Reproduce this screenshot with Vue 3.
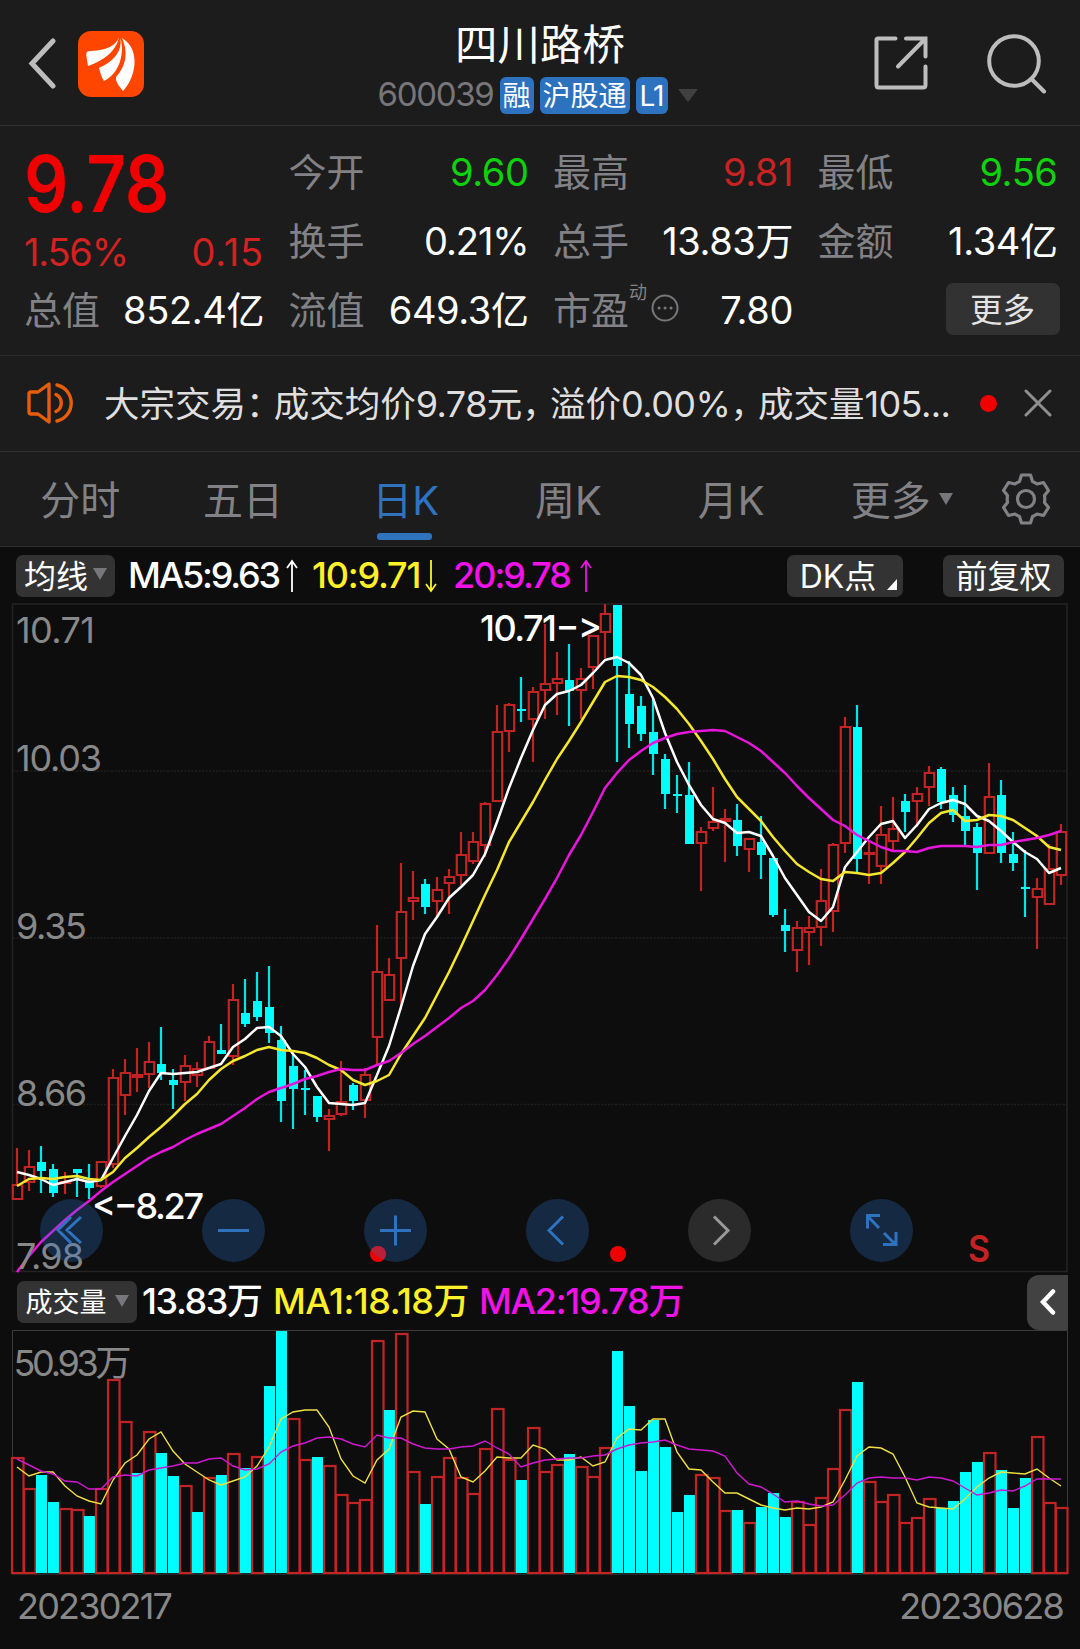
<script setup>
const STEP = 12
const FIRST = 17
const cx = (i) => FIRST + i * STEP

// direction, high, body top, body bottom, low
const candles = `
R 1148 1184 1200 1200|R 1150 1166 1183 1191|C 1146 1162 1171 1193|C 1164 1169 1193 1197|R 1172 1181 1184 1194|C 1169 1169 1173 1197|C 1164 1182 1188 1199|R 1161 1161 1187 1188|
R 1069 1077 1165 1168|R 1059 1072 1096 1115|R 1048 1074 1078 1092|R 1042 1061 1075 1088|C 1027 1064 1073 1080|C 1069 1080 1085 1109|R 1055 1065 1083 1101|R 1062 1068 1076 1087|
R 1036 1041 1069 1069|C 1024 1050 1054 1054|R 984 999 1057 1065|C 979 1013 1024 1027|C 972 1001 1017 1021|C 966 1007 1033 1043|C 1026 1040 1101 1122|C 1055 1066 1089 1129|
C 1070 1088 1089 1115|C 1096 1096 1117 1122|R 1109 1115 1120 1151|R 1061 1101 1115 1116|C 1083 1085 1101 1110|R 1068 1074 1101 1118|R 925 971 1038 1066|R 958 974 1001 1001|
R 863 911 959 1010|R 871 897 902 920|C 879 884 907 914|R 877 889 902 917|R 869 876 884 914|R 832 854 876 885|R 832 841 862 864|R 802 803 846 857|
R 705 731 802 802|R 703 704 732 752|C 677 709 710 722|R 687 691 720 762|R 624 683 691 719|R 652 678 684 715|C 644 680 691 726|R 668 678 691 719|
R 635 635 668 689|R 604 613 633 658|C 605 605 666 762|C 661 694 724 748|C 696 706 734 741|C 700 732 754 775|C 754 759 794 809|C 775 794 796 813|
C 762 795 844 844|R 827 831 844 891|R 787 821 829 831|R 809 818 822 862|C 804 820 846 856|R 838 838 850 872|C 816 842 855 879|C 858 858 915 917|
C 909 925 931 952|R 921 927 951 972|R 916 927 933 965|R 869 900 928 946|R 843 844 912 932|R 717 726 844 853|C 705 727 859 873|R 842 852 855 884|
R 806 834 867 884|R 797 828 842 850|C 794 801 812 832|R 787 793 802 827|R 766 772 788 806|C 767 769 802 809|C 787 795 815 822|C 785 816 831 846|
C 823 827 853 890|R 763 796 854 854|C 780 795 853 863|C 832 854 863 871|C 850 887 888 917|R 878 888 898 949|R 844 868 905 905|R 824 831 876 885`
  .split('|')
  .map((row, i) => {
    const [dir, high, top, bottom, low] = row.trim().split(' ')
    return { x: cx(i), up: dir === 'R', high: +high, top: +top, bottom: +bottom, low: +low }
  })

const volumeTops = [
  1457, 1488, 1475, 1502, 1508, 1509, 1516, 1488, 1379, 1421, 1473, 1431, 1453, 1476, 1485, 1512, 1477, 1475, 1453, 1468, 1456, 1386,
  1331, 1418, 1459, 1457, 1465, 1494, 1502, 1499, 1340, 1410, 1333, 1471, 1504, 1476, 1457, 1477, 1493, 1448, 1408, 1459, 1480, 1427,
  1471, 1464, 1454, 1466, 1476, 1447, 1351, 1406, 1471, 1420, 1447, 1512, 1495, 1474, 1477, 1510, 1510, 1522, 1507, 1493, 1517, 1501,
  1524, 1497, 1468, 1409, 1382, 1481, 1501, 1494, 1522, 1517, 1498, 1508, 1501, 1472, 1462, 1452, 1470, 1508, 1478, 1436, 1502, 1507,
]
// direction of each session's volume bar
const risingVolume = 'RRCCRRCRRRCRCCRCRCRCRCCRRCRRRRRCRRCRRRRRRRCRRRCRRRCCCCCCCRRRCRCCCRRRRRCRRRRRRCCCCRCCCRRR'
const volumes = volumeTops.map((top, i) => ({ x: cx(i), top, up: risingVolume[i] === 'R' }))

const line = (ys) => ys.map((y, i) => `${cx(i)},${y}`).join(' ')

const ma5 = line([
  1172, 1175, 1179, 1185, 1182, 1179, 1182, 1180, 1158, 1136, 1115, 1091, 1073, 1074, 1073, 1072, 1068, 1064, 1047, 1039, 1028, 1027,
  1036, 1054, 1067, 1087, 1103, 1104, 1105, 1103, 1075, 1046, 1007, 966, 934, 917, 898, 887, 875, 854, 822, 788, 758, 730, 705, 694,
  691, 685, 673, 660, 657, 663, 675, 698, 733, 762, 785, 805, 819, 823, 833, 832, 836, 856, 878, 895, 912, 921, 907, 867, 852, 837,
  824, 821, 838, 825, 809, 803, 800, 804, 816, 821, 831, 842, 852, 859, 873, 868,
])
const ma10 = line([
  1186, 1179, 1178, 1179, 1177, 1176, 1179, 1180, 1172, 1158, 1148, 1137, 1127, 1116, 1104, 1094, 1080, 1069, 1061, 1056, 1050, 1047,
  1050, 1051, 1053, 1058, 1065, 1070, 1080, 1085, 1081, 1075, 1054, 1036, 1018, 995, 972, 947, 921, 895, 870, 842, 822, 802, 780, 759,
  741, 722, 702, 682, 676, 677, 680, 687, 697, 709, 724, 741, 759, 779, 797, 809, 821, 837, 851, 864, 872, 879, 881, 872, 873, 875,
  873, 863, 852, 838, 823, 813, 810, 821, 820, 815, 816, 820, 828, 836, 847, 850,
])
const ma20 = line([
  1272, 1256, 1242, 1231, 1220, 1210, 1201, 1191, 1182, 1174, 1166, 1158, 1152, 1147, 1140, 1134, 1129, 1124, 1116, 1108, 1099, 1092,
  1088, 1084, 1079, 1076, 1072, 1069, 1070, 1070, 1065, 1061, 1053, 1044, 1036, 1027, 1018, 1008, 1001, 990, 975, 958, 939, 919, 899,
  878, 855, 835, 812, 788, 773, 760, 751, 743, 738, 734, 732, 731, 730, 731, 737, 743, 751, 762, 773, 786, 798, 809, 820, 826, 835,
  841, 847, 851, 851, 852, 848, 846, 846, 846, 847, 845, 845, 842, 840, 838, 835, 831,
])
const volMa1 = line([
  1467, 1476, 1472, 1472, 1486, 1496, 1501, 1504, 1480, 1463, 1455, 1439, 1432, 1451, 1464, 1472, 1480, 1485, 1481, 1477, 1466, 1447,
  1419, 1412, 1410, 1410, 1427, 1459, 1476, 1483, 1460, 1449, 1417, 1411, 1412, 1439, 1449, 1477, 1482, 1471, 1457, 1458, 1458, 1445,
  1449, 1460, 1460, 1457, 1466, 1462, 1438, 1429, 1430, 1419, 1419, 1452, 1469, 1470, 1482, 1493, 1493, 1499, 1505, 1508, 1510, 1508,
  1509, 1507, 1502, 1480, 1456, 1447, 1448, 1454, 1477, 1503, 1507, 1508, 1509, 1499, 1487, 1478, 1472, 1473, 1474, 1469, 1478, 1486,
])
const volMa2 = line([
  1459, 1465, 1471, 1474, 1481, 1482, 1489, 1489, 1477, 1475, 1476, 1470, 1468, 1466, 1463, 1463, 1459, 1458, 1466, 1470, 1469, 1464,
  1452, 1446, 1443, 1438, 1437, 1439, 1444, 1447, 1435, 1438, 1438, 1444, 1448, 1449, 1449, 1447, 1446, 1441, 1448, 1454, 1467, 1463,
  1460, 1459, 1458, 1458, 1456, 1455, 1449, 1445, 1443, 1442, 1440, 1445, 1449, 1450, 1451, 1456, 1473, 1484, 1487, 1494, 1502, 1501,
  1504, 1506, 1505, 1495, 1483, 1478, 1477, 1478, 1478, 1480, 1477, 1478, 1481, 1488, 1495, 1493, 1490, 1491, 1486, 1479, 1479, 1479,
])

const priceLabels = [
  { text: '10.71', y: 643, w: 79 },
  { text: '10.03', y: 771, w: 86 },
  { text: '9.35', y: 939, w: 71 },
  { text: '8.66', y: 1106, w: 71 },
  { text: '7.98', y: 1269, w: 68 },
]
const tabs = ['分时', '五日', '日K', '周K', '月K', '更多']
</script>

<template>
  <div class="app">
    <header class="top">
      <div class="brand">
        <svg class="back" width="30" height="52" viewBox="0 0 30 52"><path d="M25 4L4 26.500L25 49" /></svg>
        <svg width="66" height="66" viewBox="0 0 66 66">
          <rect width="66" height="66" rx="13" fill="#ff4600" />
          <g fill="#fff">
            <path d="M41 6C38 15 29 19 13 20C8 20 8 22 8.500 26L10 35C22 31 38 22 41 6Z" />
            <path d="M42.500 7C44 19 38 29 21 37C23 44 24 47 26 50C41 43 47 23 42.500 7Z" />
            <path d="M44 7C50 20 49 34 38 46C37 51 42 56 45 60C57 48 64 19 44 7Z" />
          </g>
        </svg>
      </div>
      <div class="title">
        <h1>四川路桥</h1>
        <div class="sub">
          <span class="code">600039</span>
          <span class="badge">融</span>
          <span class="badge wide">沪股通</span>
          <span class="badge l1">L1</span>
          <i class="tri dim"></i>
        </div>
      </div>
      <div class="actions">
        <svg width="54" height="54" viewBox="0 0 54 54"><path d="M21.500 2.500H4Q2.500 2.500 2.500 4V49Q2.500 51.500 4.500 51.500H49Q51.500 51.500 51.500 49V30.500M32 2.500H51.500V20.500M51 3L24 30.500" /></svg>
        <svg width="60" height="60" viewBox="0 0 60 60"><circle cx="27" cy="27" r="24.800" /><path d="M44.500 45L57 57.500" /></svg>
      </div>
    </header>

    <section class="quote">
      <div class="last">
        <b>9.78</b>
        <div><span>1.56%</span><span class="diff">0.15</span></div>
      </div>
      <div class="cell"><label>今开</label><span class="green">9.60</span></div>
      <div class="cell"><label>最高</label><span class="red">9.81</span></div>
      <div class="cell"><label>最低</label><span class="green">9.56</span></div>
      <div class="cell"><label>换手</label><span class="pct">0.21%</span></div>
      <div class="cell"><label>总手</label><span>13.83万</span></div>
      <div class="cell"><label>金额</label><span>1.34亿</span></div>
      <div class="cell"><label>总值</label><span>852.4亿</span></div>
      <div class="cell"><label>流值</label><span>649.3亿</span></div>
      <div class="cell">
        <label>市盈</label><sup>动</sup>
        <svg class="dots" width="28" height="28" viewBox="0 0 28 28"><circle cx="14" cy="14" r="12.500" /><path d="M8 14h.1M14 14h.1M20 14h.1" /></svg>
        <span>7.80</span>
      </div>
      <div class="cell end"><button class="more">更多</button></div>
    </section>

    <section class="news">
      <svg width="51" height="42" viewBox="0 0 51 42">
        <path d="M2 12Q2 10 4 10H11L22 2V40L11 32H4Q2 32 2 30ZM29 12.500A9.500 9.500 0 0 1 29 29.500M30 3A18.500 18.500 0 0 1 30 39" />
      </svg>
      <p>大宗交易<i>：</i>成交均价<span>9.78</span>元<i>，</i>溢价<span>0.00%</span><i>，</i>成交量<span>105...</span></p>
      <em></em>
      <svg class="close" width="28" height="28" viewBox="0 0 28 28"><path d="M2 2L26 26M26 2L2 26" /></svg>
    </section>

    <nav class="tabs">
      <a v-for="(t, i) in tabs" :key="t" :class="{ on: i === 2, drop: i === 5 }">{{ t }}<i v-if="i === 5" class="tri"></i></a>
      <svg width="50" height="52" viewBox="0 0 50 52">
        <path d="M20.500 2H29.500L31.500 8.500Q34 9.500 36 11L42.500 9.500L47.500 17.500L43.500 22.500Q44 26 43.500 29.500L47.500 34.500L42.500 42.500L36 41Q34 42.500 31.500 43.500L29.500 50H20.500L18.500 43.500Q16 42.500 14 41L7.500 42.500L2.500 34.500L6.500 29.500Q6 26 6.500 22.500L2.500 17.500L7.500 9.500L14 11Q16 9.500 18.500 8.500Z" />
        <circle cx="25" cy="26" r="8.500" />
      </svg>
    </nav>

    <div class="bar price-bar">
      <button class="pick avg">均线<i class="tri"></i></button>
      <span class="v5">MA5:9.63</span>
      <svg class="arrow" width="14" height="34" viewBox="0 0 14 34" stroke="#fff"><path d="M7 33V2M2 9L7 2L12 9" /></svg>
      <span class="v10">10:9.71</span>
      <svg class="arrow" width="14" height="34" viewBox="0 0 14 34" stroke="#fff029"><path d="M7 1V32M2 25L7 32L12 25" /></svg>
      <span class="v20">20:9.78</span>
      <svg class="arrow" width="14" height="34" viewBox="0 0 14 34" stroke="#f012e8"><path d="M7 33V2M2 9L7 2L12 9" /></svg>
      <button class="pick dk"><span>DK</span>点<i class="corner"></i></button>
      <button class="pick adj">前复权</button>
    </div>

    <svg class="chart" width="1080" height="671" viewBox="0 603 1080 671">
      <path class="grid" d="M13 771H1067M13 938H1067M13 1104.500H1067" />
      <path d="M12.500 604H1067V1271.500H12.500Z" fill="none" stroke="#242424" stroke-width="1.500" />
      <template v-for="c in candles" :key="c.x">
        <path v-if="c.up" class="up" :d="`M${c.x} ${c.high}V${c.top}M${c.x} ${c.bottom}V${c.low}M${c.x - 4.2} ${c.top + 1}H${c.x + 5.2}V${c.bottom - 1}H${c.x - 4.2}Z`" />
        <template v-else>
          <path class="down" :d="`M${c.x} ${c.high}V${c.low}`" />
          <rect class="fill" :x="c.x - 4" :y="c.top" width="9" :height="Math.max(2, c.bottom - c.top)" />
        </template>
      </template>
      <polyline class="ma" :points="ma5" stroke="#fff" />
      <polyline class="ma" :points="ma10" stroke="#f5e62e" />
      <polyline class="ma" :points="ma20" stroke="#e815dc" />
      <text v-for="l in priceLabels" :key="l.text" class="axis" x="16" :y="l.y" :textLength="l.w">{{ l.text }}</text>
      <text class="mark" x="480" y="641" textLength="122">10.71−&gt;</text>
      <text class="mark" x="92" y="1219" textLength="112">&lt;−8.27</text>
      <circle cx="378" cy="1254" r="8" fill="#f00000" /><circle cx="618" cy="1254" r="8" fill="#f00000" />
      <text class="sell" x="968" y="1262" textLength="22" lengthAdjust="spacingAndGlyphs">S</text>
      <g class="tools">
        <circle v-for="x in [71.5, 233.5, 395.5, 557.5, 881.5]" :key="x" :cx="x" cy="1230.500" r="31.500" fill="rgba(42,119,205,.28)" />
        <circle cx="719.500" cy="1230.500" r="31.500" fill="#2b2b2b" />
        <path d="M71 1217L58 1230L71 1243M81 1217L67 1230L81 1243M218 1230.500H249M380 1230.500H411M395.500 1215.500V1245.500M563 1216.500L549 1230.500L563 1244.500M880 1215.500H867.500V1228.500M867.500 1216L879 1228M884 1233L896 1245M896 1232V1244.500H883" stroke="#2f73be" />
        <path d="M714 1216.500L728 1230.500L714 1244.500" stroke="#999" />
      </g>
    </svg>

    <div class="bar vol-bar">
      <button class="pick vol">成交量<i class="tri"></i></button>
      <span class="w0">13.83万</span>
      <span class="w1">MA1:18.18万</span>
      <span class="w2">MA2:19.78万</span>
      <button class="fold"><svg width="16" height="26" viewBox="0 0 16 26"><path d="M13 2.500L3 13L13 23.500" /></svg></button>
    </div>

    <svg class="chart" width="1080" height="246" viewBox="0 1329 1080 246">
      <path d="M12.500 1574V1330.500H1067.500V1574Z" fill="none" stroke="#3c3c3c" stroke-width="1" />
      <text class="axis" x="13.500" y="1376" textLength="118">50.93万</text>
      <template v-for="v in volumes" :key="v.x">
        <rect v-if="v.up" class="vup" :x="v.x - 5" :y="v.top + 1" width="11.500" :height="1572 - v.top" />
        <rect v-else class="fill" :x="v.x - 5" :y="v.top" width="11" :height="1573 - v.top" />
      </template>
      <polyline class="vma" :points="volMa1" stroke="#efe040" />
      <polyline class="vma" :points="volMa2" stroke="#cf18cf" />
    </svg>

    <footer class="dates"><span>20230217</span><span>20230628</span></footer>
  </div>
</template>

<style>
body {
  margin: 0;
  background: #0d0d0d;
}
</style>

<style scoped>
.app {
  width: 1080px;
  height: 1649px;
  overflow: hidden;
  background: #0d0d0d;
  color: #fff;
  font-family: Inter, "Noto Sans CJK SC", sans-serif;
  line-height: 1.2;
}
svg { display: block; flex: none; }
i, em { font-style: normal; }
button { border: 0; margin: 0; padding: 0; font: inherit; color: #fff; box-sizing: border-box; }
.tri { display: inline-block; flex: none; border: 7.5px solid transparent; border-top: 12px solid #77777b; border-bottom: 0; }

.top {
  height: 126px;
  box-sizing: border-box;
  display: flex;
  justify-content: space-between;
  background: #1c1c1c;
  border-bottom: 1px solid #303030;
}
.brand { display: flex; width: 300px; box-sizing: border-box; padding: 31px 0 0 26px; }
.back { margin: 6px 20px 0 1.5px; fill: none; stroke: #bdbdbd; stroke-width: 5; stroke-linecap: round; }
.title { display: flex; flex-direction: column; align-items: center; }
h1 { margin: 16px 0 0; font-size: 42.5px; line-height: 58px; font-weight: 400; }
.sub { display: flex; align-items: center; height: 38px; margin: 2px 5px 0 0; }
.code { width: 122px; color: #77777b; font-size: 33px; letter-spacing: -1.3px; }
.badge { width: 34px; height: 37px; margin-right: 6px; border-radius: 6px; background: #2d72bf; font-size: 28px; line-height: 38px; text-align: center; }
.badge.wide { width: 90px; }
.badge.l1 { width: 32px; letter-spacing: -1px; font-size: 28px; margin-right: 10px; }
.tri.dim { border-width: 13px 10px 0; border-top-color: #404040; }
.actions { display: flex; width: 300px; justify-content: flex-end; gap: 59px; padding: 36px 33px 0 0; box-sizing: border-box; }
.actions svg { fill: none; stroke: #bdbdbd; stroke-width: 4; stroke-linecap: round; }
.actions svg:last-child { margin-top: -2px; }

.quote {
  height: 230px;
  box-sizing: border-box;
  padding: 12px 24px 0;
  display: grid;
  grid-template-columns: repeat(4, 240px);
  grid-template-rows: repeat(3, 69px);
  column-gap: 24.5px;
  background: #1c1c1c;
  border-bottom: 1px solid #292929;
}
.last { grid-row: span 2; color: #d42121; font-size: 38px; }
.last b { display: block; width: 160px; height: 86px; font-size: 78px; line-height: 92px; letter-spacing: -.5px; color: #f00000; font-weight: 600; transform: scaleX(.89); transform-origin: 0 0; }
.last div { display: flex; justify-content: space-between; line-height: 56px; letter-spacing: -1.2px; }
.last .diff { letter-spacing: .8px; }
.cell { display: flex; align-items: center; font-size: 38px; }
.cell label { font-size: 38px; color: #828286; }
.cell span { margin-left: auto; letter-spacing: -.4px; white-space: nowrap; }
.cell .pct { letter-spacing: -1.1px; }
.cell .green { color: #0fd20f; }
.cell .red { color: #c82323; }
sup { align-self: flex-start; margin-top: 8px; font-size: 18px; line-height: 18px; color: #828286; }
.dots { margin: -5px 0 0 4px; fill: none; stroke: #77777b; stroke-width: 2; stroke-linecap: round; }
.dots path { stroke-width: 3; }
.end { justify-content: flex-end; }
.more { width: 114px; height: 52px; margin: -4px -2px 0 0; padding-top: 3px; border-radius: 7px; background: #323232; color: #e4e4e4; font-size: 32.5px; }

.news {
  display: flex;
  align-items: center;
  height: 96px;
  box-sizing: border-box;
  padding: 0 28px 0 27px;
  background: #1c1c1c;
  border-bottom: 1px solid #303030;
}
.news svg { margin-top: -2px; fill: none; stroke: #e65d0c; stroke-width: 3.4; stroke-linejoin: round; stroke-linecap: round; }
.news p { width: 850px; margin: 2px 0 0 26px; font-size: 35.5px; line-height: 50px; color: #dfdfdf; white-space: nowrap; }
.news p i { margin-right: 10px; font-feature-settings: "halt"; }
.news p span { font-size: 36px; letter-spacing: -.6px; }
.news em { width: 17px; height: 17px; margin-left: 26px; border-radius: 50%; background: #f00000; }
.news .close { margin-left: auto; stroke: #8f8f8f; stroke-width: 3; }

.tabs { display: flex; height: 95px; box-sizing: border-box; background: #1c1c1c; border-bottom: 1px solid #303030; }
.tabs a { position: relative; width: 162.7px; display: flex; align-items: center; justify-content: center; box-sizing: border-box; padding: 4px 2px 0 0; font-size: 40px; color: #828286; }
.tabs .on { color: #2f73be; }
.tabs .on::after { content: ""; position: absolute; left: 52px; top: 81px; width: 55px; height: 7px; border-radius: 3px; background: #2f73be; }
.tabs .drop { padding-left: 16px; margin-right: 9px; }
.tabs .tri { margin: -4px 0 0 8px; }
.tabs svg { margin: 21px 0 0 16px; fill: none; stroke: #828286; stroke-width: 3.2; stroke-linejoin: round; }

.bar { position: relative; display: flex; align-items: center; font-size: 36px; white-space: nowrap; }
.price-bar { height: 57px; padding-left: 16px; }
.pick { height: 42px; display: flex; align-items: center; justify-content: center; border-radius: 7px; background: #333; font-size: 32px; padding-top: 3px; }
.pick .tri { margin: -6px 0 0 5px; border-width: 12px 7px 0; }
.avg { width: 99px; }
.bar > span { font-weight: 450; padding-top: 1px; }
.v5 { width: 157px; margin-left: 13px; letter-spacing: -2.2px; }
.v10 { width: 112px; margin-left: 13px; color: #fff029; letter-spacing: -1.2px; }
.v20 { width: 126px; margin-left: 15px; color: #f012e8; letter-spacing: -2px; }
.arrow { fill: none; stroke-width: 1.8; }
.dk { position: relative; width: 116px; margin-left: auto; padding-right: 14px; }
.corner { position: absolute; right: 6px; bottom: 7px; border-left: 10px solid transparent; border-bottom: 11px solid #fff; }
.adj { width: 121px; margin: 0 16px 0 40px; }

.chart { overflow: visible; }
.price-bar + .chart { margin-top: -1px; }
.grid { fill: none; stroke: #202020; stroke-width: 1.5; stroke-dasharray: 2 1.5; }
.up { fill: none; stroke: #c42323; stroke-width: 2.2; }
.down { stroke: #00e5e5; stroke-width: 2.2; }
.fill { fill: #00fdfd; }
.vup { fill: #0d0d0d; stroke: #c42323; stroke-width: 2.2; }
.ma { fill: none; stroke-width: 2.5; stroke-linejoin: round; }
.vma { fill: none; stroke-width: 1.4; }
.axis { fill: #888; font-size: 36px; }
.mark { fill: #fff; font-size: 36px; font-weight: 450; }
.sell { fill: #c42323; font-size: 37px; font-weight: 600; }
.tools path { fill: none; stroke-width: 3; }

.vol-bar { height: 55px; padding-left: 17px; }
.vol { width: 120px; font-size: 27px; }
.vol .tri { margin: -4px 0 0 8px; }
.w0 { width: 125px; margin-left: 5px; letter-spacing: -1.4px; }
.w1 { width: 199px; margin-left: 6px; color: #fff029; letter-spacing: -.5px; }
.w2 { margin-left: 7px; color: #f012e8; letter-spacing: -1.3px; }
.fold { width: 41px; height: 55px; margin: 1px 12px 0 auto; border-radius: 12px 0 0 12px; background: #424242; display: flex; align-items: center; justify-content: center; }
.fold path { fill: none; stroke: #fff; stroke-width: 4.5; stroke-linecap: round; }

.dates { display: flex; justify-content: space-between; padding: 8px 17px 0 17px; font-size: 36px; line-height: 46px; letter-spacing: -1.8px; color: #888; }
</style>
